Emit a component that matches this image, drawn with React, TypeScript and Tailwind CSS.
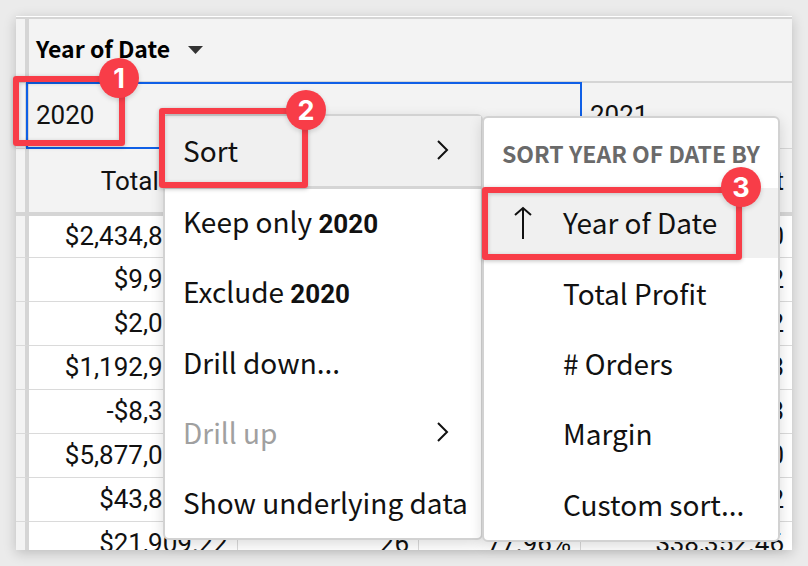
import React from "react";

const TEXT = "font-['Noto_Sans_CJK_SC','Noto_Sans',sans-serif]";
const DIGITS = "font-['Roboto','Noto_Sans',sans-serif]";

const rows = [
  ["$2,434,892.18", "3,412", "21.40%", "$2,911,302.70"],
  ["$9,941.63", "41", "18.25%", "$12,480.92"],
  ["$2,074.15", "17", "33.10%", "$3,915.52"],
  ["$1,192,930.44", "1,806", "27.62%", "$1,420,118.23"],
  ["-$8,310.27", "12", "-4.18%", "$6,204.73"],
  ["$5,877,021.96", "7,955", "41.07%", "$6,340,662.10"],
  ["$43,812.50", "64", "52.31%", "$51,097.32"],
  ["$21,909.22", "26", "77.96%", "$38,352.46"],
];

function DataTable() {
  return (
    <table className={`w-full table-fixed border-separate border-spacing-0 text-[26px] leading-8 text-[#111] ${DIGITS}`}>
      <colgroup>
        <col className="w-[13px]" />
        <col className="w-[209px]" />
        <col className="w-[181px]" />
        <col className="w-[162px]" />
        <col />
      </colgroup>
      <thead className="bg-[#f3f3f3]">
        <tr className="h-16">
          <th className="border-b-2 border-r-4 border-[#d5d5d5] p-0" />
          <th
            colSpan={4}
            scope="colgroup"
            className={`border-b-2 border-[#d5d5d5] p-0 pb-1 pl-[7px] text-left text-[23px] text-black ${TEXT}`}
          >
            <button className="flex items-center gap-[18px] font-bold">
              Year of Date
              <svg width="15" height="8" viewBox="0 0 15 8" className="mt-1" aria-hidden="true">
                <path d="M0 0h15L7.5 8z" fill="#333" />
              </svg>
            </button>
          </th>
        </tr>
        <tr className="h-[66px]">
          <th className="border-b border-r-4 border-[#d5d5d5] p-0" />
          <th colSpan={3} scope="colgroup" className="relative border-b border-[#d5d5d5] p-0 pb-[2px] pl-[7px] text-left font-normal">
            2020
            <span className="absolute -bottom-px -left-[3px] -right-px -top-px border-2 border-[#0f5fe6]" />
          </th>
          <th scope="colgroup" className="border-b border-[#d5d5d5] p-0 pb-[2px] pl-[9px] text-left font-normal">
            2021
          </th>
        </tr>
        <tr className="h-[67px]">
          <th className="border-b-4 border-r-4 border-[#d5d5d5] p-0" />
          {["Total Profit", "# Orders", "Margin", "Total Profit"].map((label, i) => (
            <th key={i} scope="col" className="border-b-4 border-[#d5d5d5] p-0 pr-[10px] text-right font-normal last:pr-2">
              {label}
            </th>
          ))}
        </tr>
      </thead>
      <tbody>
        {rows.map((row) => (
          <tr key={row[0]} className="h-11 first:h-[42px]">
            <td className="border-b border-r-4 border-b-[#dadada] border-r-[#d5d5d5] bg-[#f3f3f3] p-0" />
            {row.map((value) => (
              <td key={value} className="border-b border-r border-[#dadada] p-0 pb-[2px] pr-[9px] text-right last:border-r-0 last:pr-2">
                {value}
              </td>
            ))}
          </tr>
        ))}
      </tbody>
    </table>
  );
}

function Chevron() {
  return (
    <svg width="12" height="20" viewBox="0 0 12 20" fill="none" aria-hidden="true">
      <path d="M1 1l9 9-9 9" stroke="#111" strokeWidth="2" />
    </svg>
  );
}

const ITEM = "block h-[70px] w-full px-[18px] pb-[2px] text-left leading-[66px] whitespace-nowrap";
const PARENT_ITEM = "flex w-full items-center justify-between pl-[18px] pr-8 pb-[2px]";
const YEAR = "font-['Roboto','Noto_Sans',sans-serif] text-[26px] font-bold";

function ContextMenu() {
  return (
    <div
      role="menu"
      className={`absolute left-[163px] top-[114px] w-[320px] rounded-md border-2 border-[#d2d2d2] bg-white text-[28px] text-[#111] shadow-[0_4px_14px_rgba(0,0,0,0.14)] ${TEXT}`}
    >
      <button role="menuitem" className={`h-[73px] border-b-[3px] border-[#d5d5d5] bg-[#f0f0f0] ${PARENT_ITEM}`}>
        Sort
        <Chevron />
      </button>
      <div className="-mt-px">
        <button role="menuitem" className={ITEM}>
          Keep only <b className={YEAR}>2020</b>
        </button>
        <button role="menuitem" className={ITEM}>
          Exclude <b className={YEAR}>2020</b>
        </button>
        <button role="menuitem" className={ITEM}>Drill down...</button>
        <button role="menuitem" aria-disabled="true" className={`h-[70px] ${PARENT_ITEM}`}>
          <span className="text-[#a0a0a0]">Drill up</span>
          <Chevron />
        </button>
        <button role="menuitem" className={ITEM}>Show underlying data</button>
      </div>
    </div>
  );
}

function SortMenu() {
  return (
    <div
      role="menu"
      className={`absolute left-[482px] top-[116px] grid h-[426px] w-[298px] grid-rows-[70px_repeat(5,1fr)] overflow-hidden rounded-md border-2 border-[#d2d2d2] bg-white text-[28px] text-[#111] shadow-[0_4px_14px_rgba(0,0,0,0.14)] ${TEXT}`}
    >
      <div className="flex items-center whitespace-nowrap pl-[18px] text-[23px] font-bold text-[#6a6a6a]">SORT YEAR OF DATE BY</div>
      <button role="menuitem" className="flex items-center gap-[30px] bg-[#f0f0f0] pb-[2px] pl-[29px]">
        <svg width="20" height="34" viewBox="0 0 20 34" fill="none" stroke="#111" strokeWidth="2" className="mt-[2px]" aria-hidden="true">
          <path d="M10 33V2M2 9l8-7 8 7" />
        </svg>
        Year of Date
      </button>
      {["Total Profit", "# Orders", "Margin", "Custom sort..."].map((label) => (
        <button key={label} role="menuitem" className="flex items-center pb-[2px] pl-[79px]">
          {label}
        </button>
      ))}
    </div>
  );
}

function Callout({ n, box, badge }: { n: number; box: string; badge: string }) {
  return (
    <div className={`pointer-events-none absolute rounded-[3px] border-[6px] border-[#f83d48] shadow-[0_1px_4px_rgba(0,0,0,0.25),inset_0_1px_4px_rgba(0,0,0,0.2)] ${box}`}>
      <span className={`absolute flex size-10 items-center justify-center rounded-full bg-[#f83d48] font-['Inter',sans-serif] text-[27px] font-bold leading-none text-white shadow-[0_2px_5px_rgba(0,0,0,0.15)] ${badge}`}>
        {n}
      </span>
    </div>
  );
}

export default function App() {
  return (
    <main className="relative h-screen overflow-hidden bg-[#ebebeb] p-4">
      <div className="h-full overflow-hidden border-t border-white bg-white shadow-[0_3px_12px_rgba(0,0,0,0.2)]">
        <div className="border-t-2 border-[#d5d5d5]">
          <DataTable />
        </div>
      </div>
      <ContextMenu />
      <SortMenu />
      <Callout n={1} box="left-[13px] top-[76px] h-[70px] w-[112px]" badge="-right-5 -top-6" />
      <Callout n={2} box="left-[159px] top-[108px] h-20 w-[149px]" badge="-right-6 -top-6" />
      <Callout n={3} box="left-[482px] top-[187px] h-[73px] w-[260px]" badge="-right-[25px] -top-[26px]" />
    </main>
  );
}
